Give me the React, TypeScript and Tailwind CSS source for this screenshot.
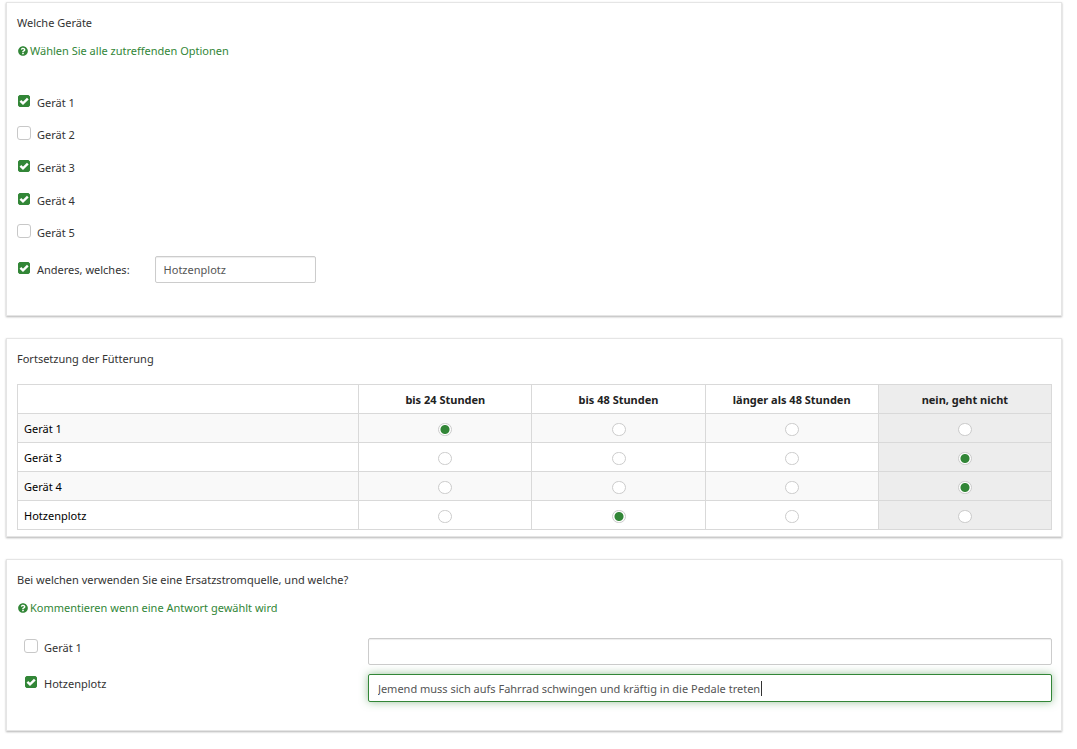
import { useState } from "react";
import type { ReactNode } from "react";
import { FaQuestionCircle } from "react-icons/fa";

const devices = [
  { id: "g1", name: "Gerät 1", checked: true },
  { id: "g2", name: "Gerät 2", checked: false },
  { id: "g3", name: "Gerät 3", checked: true },
  { id: "g4", name: "Gerät 4", checked: true },
  { id: "g5", name: "Gerät 5", checked: false },
];

const durations = ["bis 24 Stunden", "bis 48 Stunden", "länger als 48 Stunden", "nein, geht nicht"];

const feeding = [
  { name: "Gerät 1", answer: 0 },
  { name: "Gerät 3", answer: 3 },
  { name: "Gerät 4", answer: 3 },
  { name: "Hotzenplotz", answer: 1 },
];

function Question({ title, className, children }: { title: string; className: string; children: ReactNode }) {
  return (
    <section className={`border border-[#e5e5e5] bg-white pt-2.5 pr-[9px] pl-2.5 shadow-[0_1px_2px_rgba(0,0,0,0.3)] ${className}`}>
      <h2>{title}</h2>
      {children}
    </section>
  );
}

function Help({ children }: { children: ReactNode }) {
  return (
    <p className="mt-2 flex items-center gap-0.5 pl-px text-[#328637]">
      <FaQuestionCircle className="size-2.5" />
      {children}
    </p>
  );
}

function Checkbox({ id, label, defaultChecked }: { id: string; label: string; defaultChecked: boolean }) {
  return (
    <div className="flex items-center gap-1.5">
      <span className="relative mb-1 flex">
        <input
          type="checkbox"
          id={id}
          defaultChecked={defaultChecked}
          className="peer size-3.5 appearance-none rounded-[3px] border border-[#c8c8c8] bg-white checked:m-px checked:size-3 checked:rounded-xs checked:border-[#328637] checked:bg-[#328637]"
        />
        <svg
          viewBox="0 0 12 12"
          fill="none"
          stroke="white"
          strokeWidth="2.4"
          className="pointer-events-none absolute inset-px hidden size-3 peer-checked:block"
        >
          <path d="M2.4 5.8 5 8.4 9.8 3.6" />
        </svg>
      </span>
      <label htmlFor={id}>{label}</label>
    </div>
  );
}

const inputClass =
  "h-[27px] rounded-xs border border-[#ccc] bg-white px-2 text-[#555] shadow-[inset_0_1px_1px_rgba(0,0,0,0.075)] outline-none";

export default function App() {
  const [answers, setAnswers] = useState(feeding.map((row) => row.answer));
  const [comment, setComment] = useState("Jemend muss sich aufs Fahrrad schwingen und kräftig in die Pedale treten");
  const [edited, setEdited] = useState(false);

  return (
    <main className="flex flex-col gap-[22px] bg-white pt-0.5 pr-[15px] pb-4 pl-1.5 font-['Noto_Sans',sans-serif] text-[11px] leading-5 text-[#333]">
      <Question title="Welche Geräte" className="pb-8">
        <Help>Wählen Sie alle zutreffenden Optionen</Help>
        <div className="mt-[19px]">
          {devices.map((d) => (
            <div key={d.id} className={`flex items-end ${d.checked ? "h-[33px]" : "h-8"}`}>
              <Checkbox id={d.id} label={d.name} defaultChecked={d.checked} />
            </div>
          ))}
        </div>
        <div className="mt-[13px] flex items-center gap-[25px]">
          <Checkbox id="other" label="Anderes, welches:" defaultChecked />
          <input type="text" aria-label="Anderes, welches" defaultValue="Hotzenplotz" className={`w-[161px] ${inputClass}`} />
        </div>
      </Question>

      <Question title="Fortsetzung der Fütterung" className="pb-1.5">
        <table className="mt-[15px] w-full table-fixed border-collapse text-black">
          <thead>
            <tr className="h-[29px]">
              <td className="w-[33%] border border-[#d9d9d9]" />
              {durations.map((d, i) => (
                <th
                  key={d}
                  scope="col"
                  className={`border border-[#d9d9d9] px-0 pt-0.5 pb-0 font-bold text-[#222] ${i === 3 ? "bg-[#ededed]" : ""}`}
                >
                  {d}
                </th>
              ))}
            </tr>
          </thead>
          <tbody>
            {feeding.map((row, r) => (
              <tr key={row.name} className="h-[29px] odd:bg-[#f9f9f9]">
                <th scope="row" className="border border-[#d9d9d9] px-1.5 pt-0.5 pb-0 text-left font-normal">
                  {row.name}
                </th>
                {durations.map((d, i) => (
                  <td key={d} className={`border border-[#d9d9d9] p-0 ${i === 3 ? "bg-[#ededed]" : ""}`}>
                    <input
                      type="radio"
                      name={`feeding-${r}`}
                      aria-label={`${row.name}: ${d}`}
                      checked={answers[r] === i}
                      onChange={() => setAnswers(answers.map((a, n) => (n === r ? i : a)))}
                      className="mx-auto mt-0.5 block h-[13px] w-3.5 appearance-none rounded-full border border-[#ccc] bg-white bg-clip-padding checked:bg-[radial-gradient(circle,#328637_4px,white_5px)]"
                    />
                  </td>
                ))}
              </tr>
            ))}
          </tbody>
        </table>
      </Question>

      <Question title="Bei welchen verwenden Sie eine Ersatzstromquelle, und welche?" className="pb-7">
        <Help>Kommentieren wenn eine Antwort gewählt wird</Help>
        <div className="mt-5 grid grid-cols-[calc(34%-1px)_1fr] items-start gap-y-[9px]">
          <div className="pl-[7px]">
            <Checkbox id="power-g1" label="Gerät 1" defaultChecked={false} />
          </div>
          <input type="text" aria-label="Kommentar Gerät 1" className={`w-full ${inputClass}`} />
          <div className="pl-[7px]">
            <Checkbox id="power-other" label="Hotzenplotz" defaultChecked />
          </div>
          <div className="relative flex">
            <input
              type="text"
              aria-label="Kommentar Hotzenplotz"
              value={comment}
              onChange={(e) => {
                setComment(e.target.value);
                setEdited(true);
              }}
              className="h-7 w-full rounded-xs border border-[#328637] bg-white px-[9px] text-[#555] shadow-[0_0_8px_rgba(50,134,55,0.5)] outline-none"
            />
            {!edited && <span className="pointer-events-none absolute top-[7px] left-[393px] h-[15px] w-px bg-[#333]" />}
          </div>
        </div>
      </Question>
    </main>
  );
}
